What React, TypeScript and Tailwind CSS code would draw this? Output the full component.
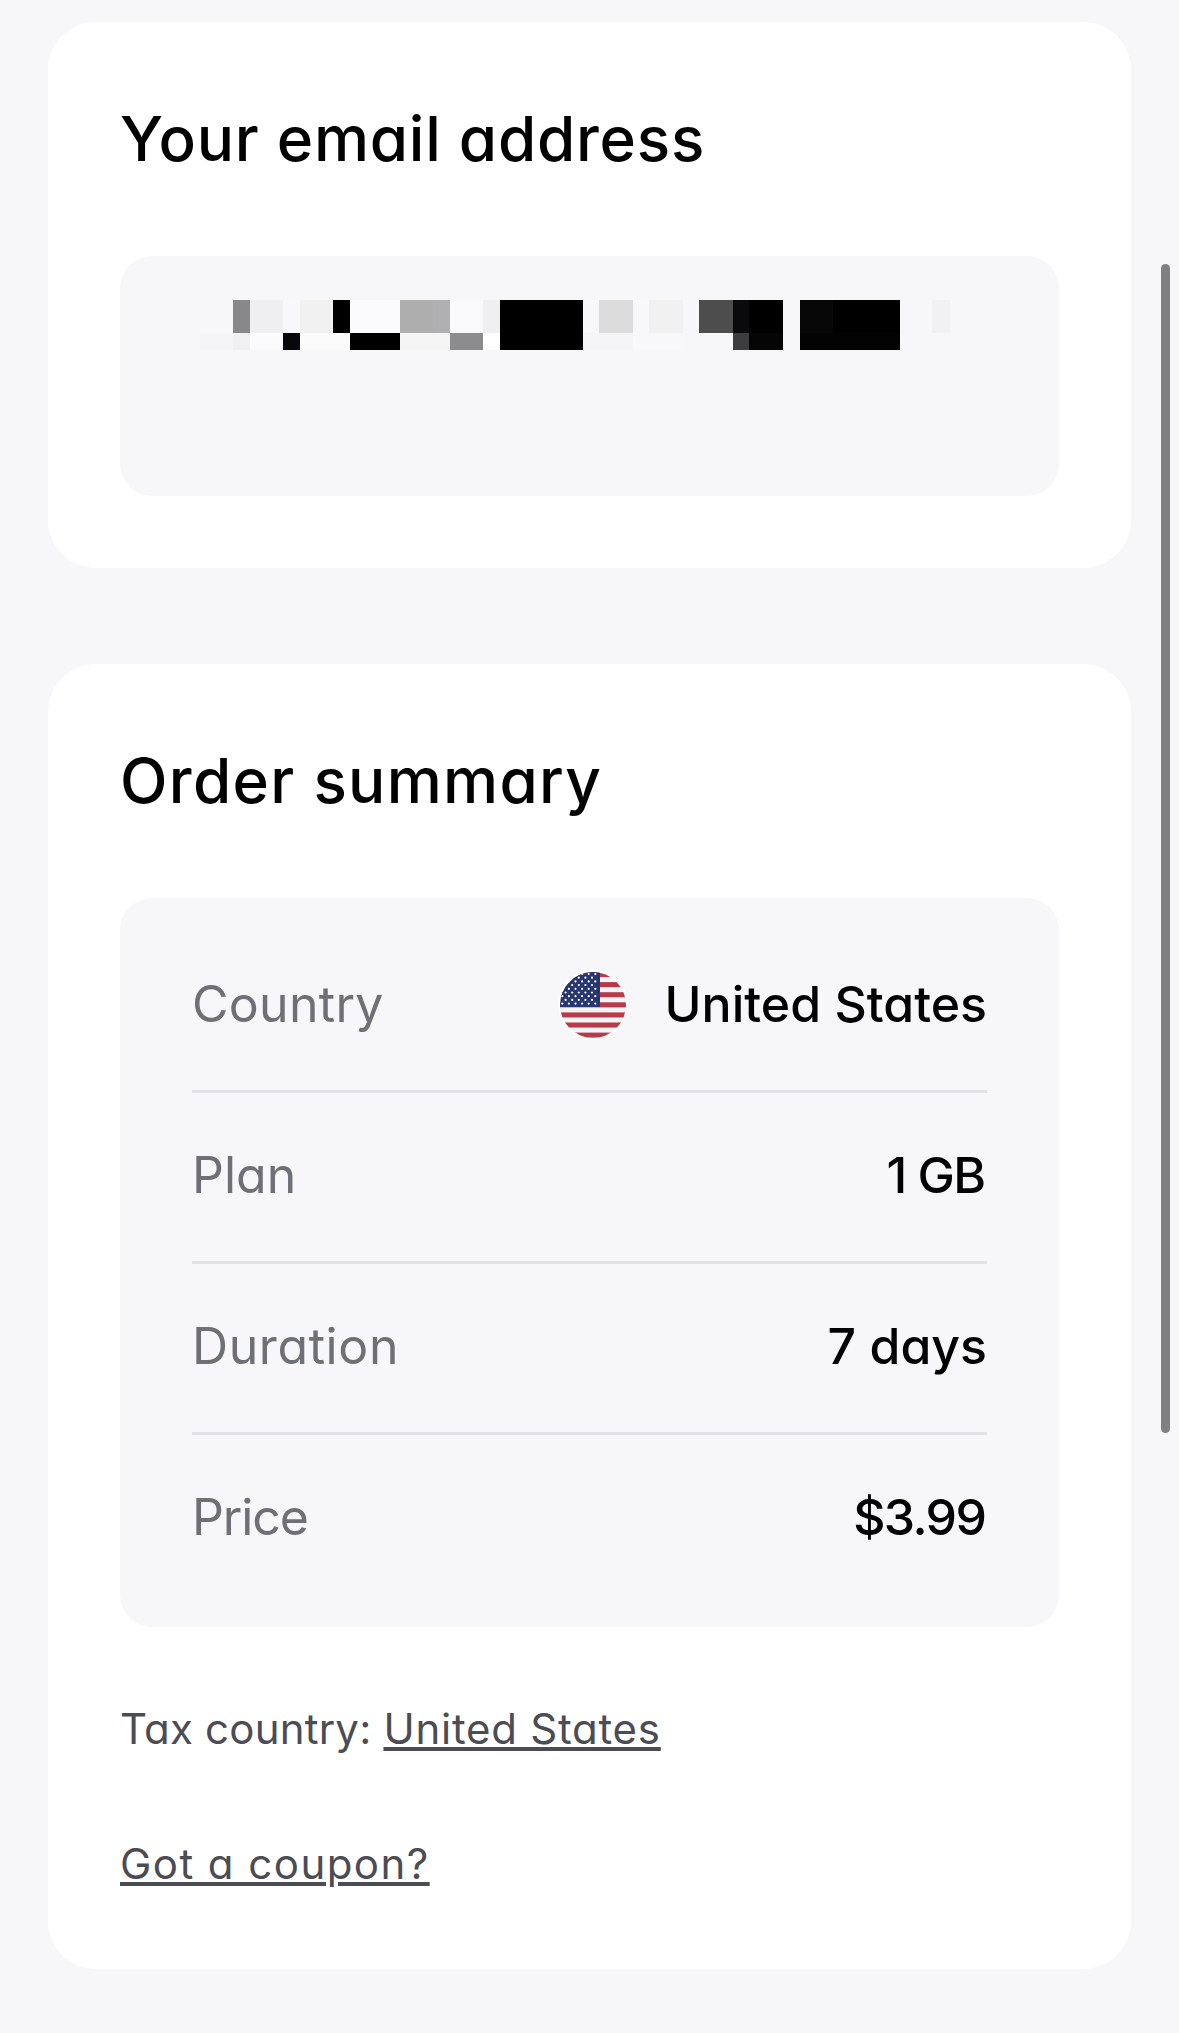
const font = "font-['Inter','Liberation_Sans',sans-serif] [font-feature-settings:'cv11']";

type Cell = [number, number, string];
const topRow: Cell[] = [
  [232, 261, "#888888"], [261, 319, "#efeff1"], [319, 348, "#f8f8fa"], [348, 406, "#f1f1f2"], [406, 435, "#000000"],
  [435, 522, "#fbfbfd"], [522, 580, "#aeaeae"], [580, 609, "#b0b0b2"], [609, 667, "#f9f9fb"], [667, 696, "#efeff0"],
  [696, 841, "#000000"], [841, 870, "#f8f8fa"], [870, 928, "#dcdcdc"], [928, 957, "#f8f8fa"], [957, 1015, "#f1f1f1"],
  [1044, 1102, "#4d4d4d"], [1102, 1131, "#0a0a0c"], [1131, 1190, "#000000"], [1219, 1277, "#070707"], [1277, 1393, "#000000"],
  [1450, 1480, "#f1f1f3"],
];
const bottomRow: Cell[] = [
  [174, 232, "#f5f5f7"], [232, 261, "#f0f0f2"], [261, 319, "#fbfbfd"], [319, 348, "#08080c"], [348, 435, "#fbfbfc"],
  [435, 522, "#000000"], [522, 609, "#f5f5f5"], [609, 667, "#8c8c8e"], [667, 696, "#ffffff"], [696, 841, "#000000"],
  [841, 928, "#f5f5f7"], [928, 1015, "#f8f8fa"], [1102, 1131, "#3d3d3f"], [1131, 1190, "#050505"], [1219, 1393, "#030303"],
];

function Mosaic() {
  return (
    <svg width="939" height="50" viewBox="0 0 939 50" shapeRendering="crispEdges" className="block" aria-hidden="true">
      {topRow.map(([a, b, c]) => (
        <rect key={"t" + a} x={a / 1.742 - 20} y="0" width={(b - a) / 1.742} height="33" fill={c} />
      ))}
      {bottomRow.map(([a, b, c]) => (
        <rect key={"b" + a} x={a / 1.742 - 20} y="33" width={(b - a) / 1.742} height="17" fill={c} />
      ))}
    </svg>
  );
}

function Flag() {
  const stars: [number, number][] = [];
  for (let r = 0; r < 9; r++) {
    const odd = r % 2 === 1;
    for (let c = 0; c < (odd ? 5 : 6); c++) stars.push([(odd ? 7.6 : 4.3) + c * 6.6, 4 + r * 3.7]);
  }
  const stripes = [0, 1, 2, 3, 4, 5, 6];
  return (
    <svg width="70" height="70" viewBox="0 0 70 70" aria-hidden="true" className="mt-[3px] shrink-0">
      <defs>
        <clipPath id="flag-circle"><circle cx="35" cy="35" r="33" /></clipPath>
      </defs>
      <circle cx="35" cy="35" r="35" fill="#ffffff" />
      <g clipPath="url(#flag-circle)">
        <rect x="0" y="0" width="70" height="70" fill="#f4f4f6" />
        {stripes.map((i) => (
          <rect key={i} x="0" y={2 + i * 10.1} width="70" height="5.05" fill="#b8394a" />
        ))}
        <rect x="0" y="0" width="42" height="37" fill="#28366f" />
        {stars.map(([x, y]) => (
          <circle key={x + "-" + y} cx={x} cy={y} r="1.1" fill="#ffffff" />
        ))}
      </g>
    </svg>
  );
}

function Row({ label, tracking, last, children }: { label: string; tracking: string; last?: boolean; children: React.ReactNode }) {
  return (
    <div className={"flex items-center justify-between pb-[5px] " + (last ? "h-[168px]" : "h-[171px] border-b-[3px] border-[#e2e2e6]")}>
      <span className={"text-[50px] leading-none text-[#6f6f76] " + tracking}>{label}</span>
      {children}
    </div>
  );
}

const value = "text-[50px] leading-none font-medium text-black";

export default function App() {
  return (
    <div className={"relative h-[2033px] overflow-hidden bg-[#f7f7f9] px-12 pt-[22px] " + font}>
      <section className="h-[546px] rounded-[48px] bg-white px-[72px] pt-[72px]">
        <h2 className="text-[62px] leading-[90px] font-medium tracking-[0.75px] text-black">Your email address</h2>
        <div className="mt-[72px] h-[240px] rounded-[32px] bg-[#f7f7f9] pt-11">
          <Mosaic />
        </div>
      </section>

      <section className="mt-[96px] h-[1305px] rounded-[48px] bg-white px-[72px] pt-[72px]">
        <h2 className="text-[62px] leading-[90px] font-medium tracking-[1.3px] text-black">Order summary</h2>
        <div className="mt-[72px] rounded-[32px] bg-[#f7f7f9] px-[72px] py-6">
          <Row label="Country" tracking="tracking-[0.3px]">
            <span className="flex items-center gap-[37px]">
              <Flag />
              <span className={value}>United States</span>
            </span>
          </Row>
          <Row label="Plan" tracking="tracking-[0px]"><span className={value + " pr-[2.5px] tracking-[-1.6px]"}>1 GB</span></Row>
          <Row label="Duration" tracking="tracking-[0.6px]"><span className={value}>7 days</span></Row>
          <Row label="Price" tracking="tracking-[-1.1px]" last><span className={value + " pr-[1.6px] tracking-[-1.6px]"}>$3.99</span></Row>
        </div>
        <p className="mt-[70px] text-[42px] leading-[64px] tracking-[0.2px] text-[#4c4c54]">
          Tax country: <span className="tracking-[0.75px] underline">United States</span>
        </p>
        <p className="mt-[71px] text-[42px] leading-[64px] tracking-[1.45px] text-[#4c4c54]">
          <span className="underline">Got a coupon?</span>
        </p>
      </section>

      <div className="absolute left-[1161px] top-[264px] h-[1169px] w-[9px] rounded-full bg-[#808083]" />
    </div>
  );
}
